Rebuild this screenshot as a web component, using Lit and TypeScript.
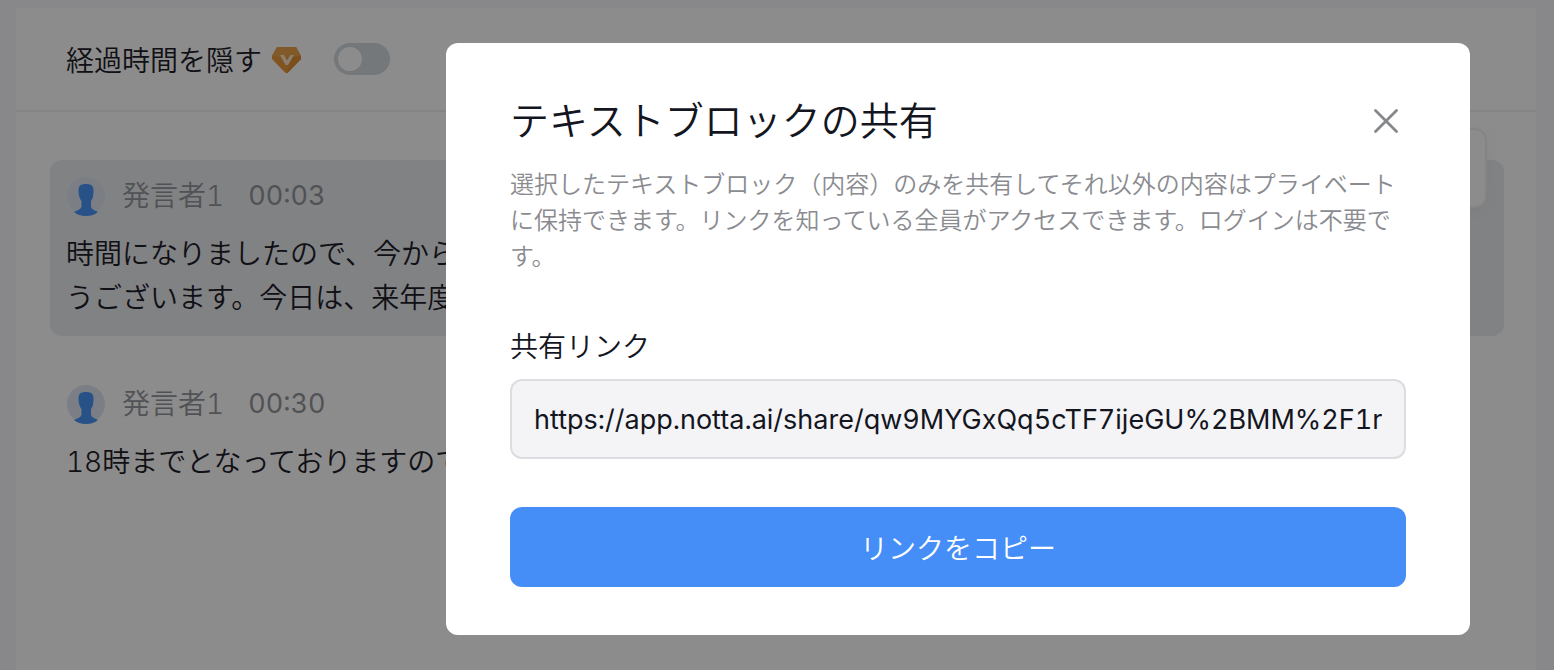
import { LitElement, html, css, svg } from "lit";
import { customElement, property, state } from "lit/decorators.js";

const gem = svg`
  <path d="M5 0H24L29 9V12L15.5 26H13.5L0 12V9Z" fill="#e99a3c" />
  <path d="M5 0H24L29 9L20 10H8L0 9Z" fill="#eda54e" />
  <path d="M29 9V12L15.500 26H14.500L20 10Z" fill="#de9034" />
  <path d="M8 8H12L15 13.500L18.500 8H22L16 18H13.500Z" fill="#fbe6cc" />
`;

@customElement("transcript-segment")
export class TranscriptSegment extends LitElement {
  @property() speaker = "";
  @property() time = "";
  @property({ type: Array }) lines: string[] = [];
  @property({ type: Boolean, reflect: true }) selected = false;

  static styles = css`
    :host {
      display: block;
      padding: 16px;
      border-radius: 12px;
    }
    :host([selected]) {
      background: #ebedf0;
    }
    .head {
      display: flex;
      align-items: center;
      height: 40px;
      color: #94969c;
    }
    .avatar {
      width: 40px;
      height: 40px;
      margin-right: 16px;
    }
    .name {
      margin-right: 24px;
    }
    .time {
      font-size: 27px;
      font-weight: 400;
    }
    .text {
      margin: 16px 0 0;
      line-height: 44px;
      color: #1e2028;
      white-space: nowrap;
    }
  `;

  render() {
    return html`
      <div class="head">
        <svg class="avatar" viewBox="0 0 40 40" aria-hidden="true">
          <circle cx="20" cy="20" r="19" fill="#e0e6f2" />
          <path
            d="M20 8C25.500 8 27.500 10 27.500 14.500C27.500 19 27 22.500 25 25V30C25 33 28 34 32 36C29 38.500 25 40 20 40C15 40 11 38.500 8 36C12 34 15.500 33 15.500 30V25C13.500 22.500 12.500 19 12.500 14.500C12.500 10 14.500 8 20 8Z"
            fill="#4a94f7"
          />
        </svg>
        <span class="name">${this.speaker}</span>
        <time class="time">${this.time}</time>
      </div>
      <p class="text">${this.lines.map((l, i) => (i ? html`<br />${l}` : l))}</p>
    `;
  }
}

@customElement("share-dialog")
export class ShareDialog extends LitElement {
  @property() link = "";

  static styles = css`
    :host {
      display: block;
      box-sizing: border-box;
      width: 1024px;
      max-width: 100%;
      padding: 48px 64px;
      border-radius: 12px;
      background: #fff;
      color: #14161f;
    }
    .top {
      display: flex;
      align-items: center;
      justify-content: space-between;
      height: 60px;
    }
    .title {
      margin: 0;
      font-size: 39px;
      font-weight: inherit;
    }
    .close {
      display: flex;
      padding: 8px;
      border: 0;
      background: none;
      color: #85878c;
      cursor: pointer;
    }
    .desc {
      margin: 16px 0 52px;
      font-size: 24px;
      line-height: 36px;
      color: #8a8b90;
    }
    .label {
      display: block;
      line-height: 40px;
    }
    .link {
      display: block;
      box-sizing: border-box;
      width: 100%;
      height: 80px;
      margin: 12px 0 48px;
      padding: 0 22px;
      border: 2px solid #dcdde1;
      border-radius: 12px;
      background: #f4f4f6;
      color: inherit;
      font: 400 27px "Inter", sans-serif;
      font-variant-numeric: tabular-nums;
      outline: none;
    }
    .copy {
      display: block;
      width: 100%;
      height: 80px;
      border: 0;
      border-radius: 12px;
      background: #458df7;
      color: #fff;
      font: inherit;
      font-family: "Noto Sans CJK JP", sans-serif;
      cursor: pointer;
    }
  `;

  private copy() {
    navigator.clipboard?.writeText(this.link);
  }

  render() {
    return html`
      <div class="top">
        <h1 class="title">テキストブロックの共有</h1>
        <button class="close" aria-label="閉じる">
          <svg width="24" height="24" viewBox="0 0 24 24" aria-hidden="true">
            <path
              d="M1.500 1.500L22.500 22.500M22.500 1.500L1.500 22.500"
              stroke="currentColor"
              stroke-width="2.800"
              stroke-linecap="round"
            />
          </svg>
        </button>
      </div>
      <p class="desc">
        選択したテキストブロック（内容）のみを共有してそれ以外の内容はプライベートに保持できます。リンクを知っている全員がアクセスできます。ログインは不要です。
      </p>
      <label class="label" for="link">共有リンク</label>
      <input class="link" id="link" type="text" readonly .value=${this.link} />
      <button class="copy" @click=${this.copy}>リンクをコピー</button>
    `;
  }
}

@customElement("app-root")
export class AppRoot extends LitElement {
  @state() private hideTime = false;

  static styles = css`
    :host {
      display: block;
      position: relative;
      box-sizing: border-box;
      min-height: 100vh;
      padding: 8px 18px 0 16px;
      background: #f7f7fc;
      font: 350 28px / 40px "Inter", "Noto Sans CJK JP", sans-serif;
      font-variant-numeric: tabular-nums;
      overflow: hidden;
    }
    .panel {
      position: relative;
      min-height: calc(100vh - 8px);
      background: #fff;
    }
    .bar {
      display: flex;
      align-items: center;
      height: 102px;
      padding: 0 50px;
      border-bottom: 2px solid #f0f0f2;
      color: #1e2028;
      font-family: "Noto Sans CJK JP", sans-serif;
    }
    .gem {
      margin: 2px 33px 0 10px;
    }
    .switch {
      appearance: none;
      display: flex;
      align-items: center;
      box-sizing: border-box;
      width: 56px;
      height: 32px;
      margin: 0;
      padding: 4px;
      border-radius: 16px;
      background: #d3dade;
      cursor: pointer;
    }
    .switch::before {
      content: "";
      width: 24px;
      height: 24px;
      border-radius: 50%;
      background: #fff;
    }
    .switch:checked {
      justify-content: flex-end;
      background: #458df7;
    }
    .segments {
      display: grid;
      gap: 32px;
      padding: 48px 32px 32px 34px;
    }
    .tools {
      position: absolute;
      top: 120px;
      right: 49px;
      box-sizing: border-box;
      width: 240px;
      height: 80px;
      border: 2px solid #f0f0f2;
      border-radius: 12px;
      background: #fff;
      box-shadow: 0 4px 16px rgba(0, 0, 0, 0.03);
    }
    .overlay {
      position: absolute;
      inset: 0;
      display: flex;
      align-items: flex-start;
      justify-content: flex-end;
      padding: 43px 84px 35px;
      background: rgba(0, 0, 0, 0.45);
    }
  `;

  render() {
    return html`
      <main class="panel">
        <header class="bar">
          <label for="hide-time">経過時間を隠す</label>
          <svg class="gem" width="29" height="26" viewBox="0 0 29 26" aria-hidden="true">${gem}</svg>
          <input
            class="switch"
            id="hide-time"
            type="checkbox"
            role="switch"
            .checked=${this.hideTime}
            @change=${() => (this.hideTime = !this.hideTime)}
          />
        </header>
        <div class="segments">
          <transcript-segment
            selected
            speaker="発言者1"
            time="00:03"
            .lines=${["時間になりましたので、今から", "うございます。今日は、来年度"]}
          ></transcript-segment>
          <transcript-segment
            speaker="発言者1"
            time="00:30"
            .lines=${["18時までとなっておりますので"]}
          ></transcript-segment>
        </div>
        <div class="tools"></div>
      </main>
      <div class="overlay">
        <share-dialog
          role="dialog"
          aria-modal="true"
          link="https://app.notta.ai/share/qw9MYGxQq5cTF7ijeGU%2BMM%2F1r"
        ></share-dialog>
      </div>
    `;
  }
}
